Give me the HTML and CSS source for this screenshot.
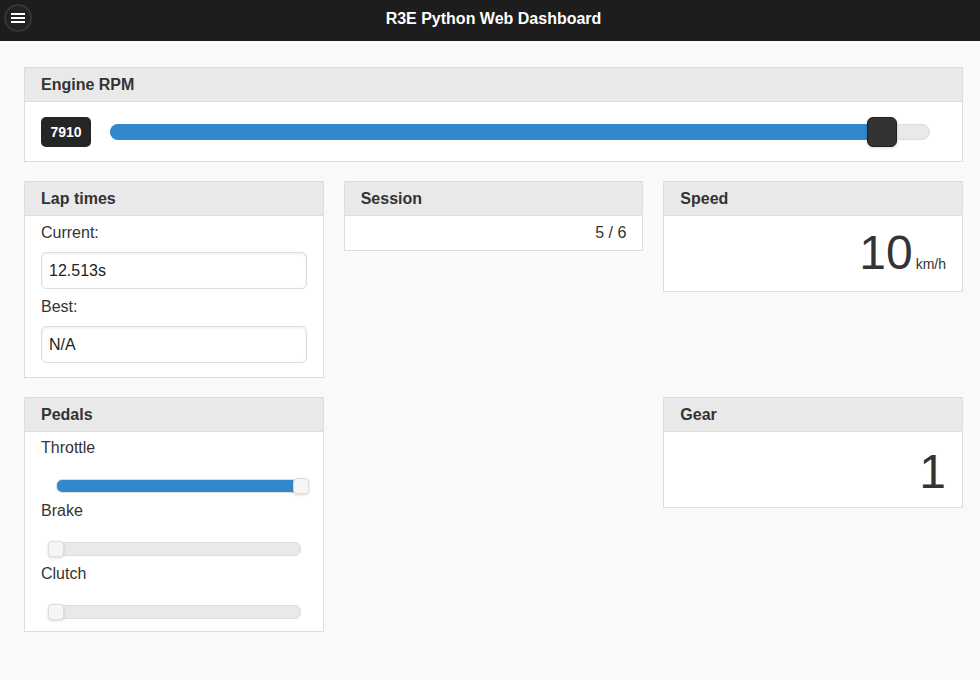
FILE: index.html
```html
<!DOCTYPE html>
<html>
<head>
<meta charset="utf-8">
<title>R3E Python Web Dashboard</title>
<link rel="stylesheet" href="styles.css">
</head>
<body>
<header class="topbar">
  <button class="menu-btn" aria-label="Menu">
    <svg width="14" height="10" viewBox="0 0 14 10"><rect x="0" y="0" width="14" height="2" fill="#fff"/><rect x="0" y="4" width="14" height="2" fill="#fff"/><rect x="0" y="8" width="14" height="2" fill="#fff"/></svg>
  </button>
  <h1 class="title">R3E Python Web Dashboard</h1>
  <span class="spacer"></span>
</header>

<main class="content">
  <section class="panel rpm-panel">
    <div class="panel-head">Engine RPM</div>
    <div class="rpm-body">
      <span class="rpm-badge">7910</span>
      <div class="rpm-track">
        <div class="rpm-fill" style="width:94.3%"></div>
        <div class="rpm-thumb" style="left:94.3%"></div>
      </div>
    </div>
  </section>

  <div class="grid">
    <section class="panel">
      <div class="panel-head">Lap times</div>
      <div class="lap-body">
        <div class="field-label">Current:</div>
        <div class="text-input">12.513s</div>
        <div class="field-label">Best:</div>
        <div class="text-input">N/A</div>
      </div>
    </section>

    <section class="panel">
      <div class="panel-head">Session</div>
      <div class="session-body">5 / 6</div>
    </section>

    <section class="panel">
      <div class="panel-head">Speed</div>
      <div class="speed-body"><span class="big-num">10</span><span class="unit">km/h</span></div>
    </section>

    <section class="panel">
      <div class="panel-head">Pedals</div>
      <div class="pedal-body">
        <div class="field-label">Throttle</div>
        <div class="pedal-slider pedal-full">
          <div class="pedal-track"><div class="pedal-fill" style="width:100%"></div></div>
          <div class="pedal-thumb" style="left:100%"></div>
        </div>
        <div class="field-label">Brake</div>
        <div class="pedal-slider pedal-empty">
          <div class="pedal-track"></div>
          <div class="pedal-thumb" style="left:0%"></div>
        </div>
        <div class="field-label">Clutch</div>
        <div class="pedal-slider pedal-empty">
          <div class="pedal-track"></div>
          <div class="pedal-thumb" style="left:0%"></div>
        </div>
      </div>
    </section>

    <div class="empty-cell"></div>

    <section class="panel">
      <div class="panel-head">Gear</div>
      <div class="gear-body"><span class="big-num">1</span></div>
    </section>
  </div>
</main>
</body>
</html>
```

FILE: styles.css
```css
* { box-sizing: border-box; }

html, body {
  margin: 0;
  padding: 0;
  background: #f9f9f9;
  font-family: "Liberation Sans", Arial, sans-serif;
  color: #333;
}

.topbar {
  height: 41px;
  background: #1d1d1d;
  display: grid;
  grid-template-columns: 40px 1fr 40px;
  align-items: start;
}

.menu-btn {
  margin: 4px 0 0 4px;
  width: 28px;
  height: 28px;
  padding: 0;
  border-radius: 50%;
  border: 2px solid #353535;
  background: #222;
  display: flex;
  align-items: center;
  justify-content: center;
  cursor: pointer;
}
.menu-btn svg { display: block; }

.title {
  margin: 0;
  text-align: center;
  font-size: 16px;
  font-weight: bold;
  line-height: 37px;
  color: #fff;
  padding-left: 7px;
}

.content {
  padding: 26px 17px 24px 24px;
}

.panel {
  background: #fff;
  border: 1px solid #dddddd;
  min-width: 0;
}

.panel-head {
  height: 34px;
  line-height: 33px;
  padding: 0 16px;
  background: #e9e9e9;
  border-bottom: 1px solid #dddddd;
  font-weight: bold;
  font-size: 16px;
  color: #333;
}

/* Engine RPM */
.rpm-body {
  display: flex;
  align-items: center;
  padding: 15px 32px 14px 16px;
}
.rpm-badge {
  width: 50px;
  height: 30px;
  line-height: 30px;
  text-align: center;
  background: #252525;
  color: #fff;
  font-weight: bold;
  font-size: 14px;
  border-radius: 5px;
  margin-right: 19px;
}
.rpm-track {
  position: relative;
  flex: 1;
  height: 16px;
  background: #e9e9e9;
  border: 1px solid #dddddd;
  border-radius: 8px;
}
.rpm-fill {
  background: #3388cc;
  border-radius: 8px 0 0 8px;
  margin: -1px 0 0 -1px;
  height: 16px;
}
.rpm-thumb {
  position: absolute;
  top: -8px;
  width: 30px;
  height: 30px;
  margin-left: -15px;
  background: #333;
  border: 1px solid #1f1f1f;
  border-radius: 6px;
  box-shadow: 0 1px 3px rgba(0,0,0,0.15);
}

/* grid */
.grid {
  margin-top: 19px;
  display: grid;
  grid-template-columns: repeat(3, minmax(0, 1fr));
  column-gap: 20px;
  row-gap: 19px;
  align-items: start;
}

.field-label {
  font-size: 16px;
  line-height: 22px;
}

/* Lap times */
.lap-body {
  padding: 6px 16px 14px;
}
.lap-body .field-label { margin-bottom: 8px; }
.text-input {
  height: 37px;
  line-height: 35px;
  padding: 0 7px;
  border: 1px solid #dddddd;
  border-radius: 5px;
  font-size: 16px;
  color: #222;
  background: #fff;
  box-shadow: inset 0 1px 3px rgba(0,0,0,0.08);
  margin-bottom: 7px;
}
.text-input:last-child { margin-bottom: 0; }

/* Session */
.session-body {
  padding: 6px 16px 6px;
  line-height: 22px;
  font-size: 16px;
  text-align: right;
}

/* Speed / Gear */
.speed-body,
.gear-body {
  text-align: right;
  font-size: 48px;
  line-height: 55px;
}
.speed-body { padding: 9px 16px 11px; }
.gear-body { padding: 12px 16px 8px; }
.big-num { color: #333; }
.unit {
  font-size: 14px;
  line-height: 16px;
  margin-left: 3px;
}

/* Pedals */
.pedal-body {
  padding: 5px 16px 11px;
}
.pedal-slider {
  position: relative;
  height: 16px;
  margin: 19px 0 6px;
  width: 253px;
}
.pedal-slider:last-child { margin-bottom: 0; }
.pedal-full { margin-left: 15px; }
.pedal-empty { margin-left: 7px; }
.pedal-track {
  position: absolute;
  left: 0;
  right: 0;
  top: 1px;
  height: 14px;
  background: #e9e9e9;
  border: 1px solid #dddddd;
  border-radius: 6px;
  overflow: hidden;
}
.pedal-fill {
  height: 100%;
  background: #3388cc;
}
.pedal-thumb {
  position: absolute;
  top: 0;
  width: 16px;
  height: 16px;
  background: #f6f6f6;
  border: 1px solid #dddddd;
  border-radius: 4px;
  box-shadow: 0 1px 3px rgba(0,0,0,0.15);
}
.pedal-full .pedal-thumb { margin-left: -16px; }
```
